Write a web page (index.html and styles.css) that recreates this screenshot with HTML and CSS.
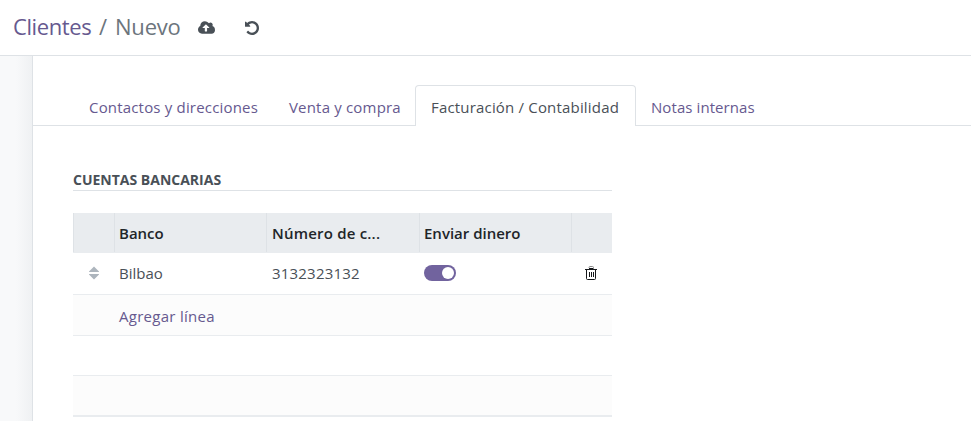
FILE: index.html
```html
<!DOCTYPE html>
<html lang="es">
<head>
<meta charset="utf-8">
<title>Clientes / Nuevo</title>
<link rel="stylesheet" href="styles.css">
</head>
<body>
<header class="control-panel">
  <div class="breadcrumb"><a class="crumb-link">Clientes</a><span class="crumb-sep">/</span><span class="crumb-current">Nuevo</span></div>
  <svg class="icon-save" viewBox="0 0 1920 1792"><path fill="currentColor" d="M1280 864q0-14-9-23L919 489q-9-9-23-9t-23 9L522 840q-10 12-10 24 0 14 9 23t23 9h224v352q0 13 9.500 22.500t22.500 9.500h192q13 0 22.500-9.500t9.500-22.500V896h224q13 0 22.500-9.500t9.500-22.500zm640 288q0 159-112.500 271.500T1536 1536H448q-185 0-316.500-131.500T0 1088q0-130 70-240t188-165q-2-30-2-43 0-212 150-362t362-150q156 0 285.500 87T1242 346q71-62 166-62 106 0 181 75t75 181q0 76-41 138 130 31 213.500 135.500T1920 1152z"/></svg>
  <svg class="icon-undo" viewBox="0 0 1536 1536"><path fill="currentColor" d="M1536 768q0 156-61 298t-164 245-245 164-298 61q-172 0-327-72.500T177 1259q-7-10-6.500-22.500t8.500-20.500l137-138q10-9 25-9 16 2 23 12 73 95 179 147t225 52q104 0 198.500-40.500T1130 1130t109.500-163.500T1280 768t-40.500-198.500T1130 406 966.500 296.500 768 256q-98 0-188 35.500T420 393l137 138q31 30 14 69-17 40-59 40H64q-26 0-45-19T0 576V128q0-42 40-59 39-17 69 14l130 129Q346 111 483.500 55.500T768 0q156 0 298 61t245 164 164 245 61 298z"/></svg>
</header>
<main class="content">
  <section class="sheet">
    <nav class="tabs">
      <a class="tab tab-contacts">Contactos y direcciones</a>
      <a class="tab tab-sales">Venta y compra</a>
      <a class="tab active">Facturación / Contabilidad</a>
      <a class="tab tab-notes">Notas internas</a>
    </nav>
    <div class="panel">
      <h2 class="group-title"><span>Cuentas bancarias</span></h2>
      <div class="table">
        <div class="row head">
          <div class="cell"></div>
          <div class="cell"><span>Banco</span></div>
          <div class="cell col-number"><span>Número de c...</span></div>
          <div class="cell"><span>Enviar dinero</span></div>
          <div class="cell"></div>
        </div>
        <div class="row record">
          <div class="cell handle"><svg viewBox="0 0 10 14"><path fill="currentColor" d="M5 0.500 10 5.500V6H0V5.500ZM0 8H10V8.500L5 13.500 0 8.500Z"/></svg></div>
          <div class="cell"><span>Bilbao</span></div>
          <div class="cell col-number"><span>3132323132</span></div>
          <div class="cell"><span class="switch"></span></div>
          <div class="cell trash"><svg viewBox="0 0 12 14"><path fill="none" stroke="#888" d="M4 2V1.500Q4 .5 5 .5H7.500Q8.500.5 8.500 1.500V2"/><path fill="none" stroke="#16181b" d="M0 3.500H12M1.500 3.500V12.500Q1.500 13.500 2.500 13.500H9.500Q10.500 13.500 10.500 12.500V3.500M4 2.500H8.500M4.500 6V11M6.500 6V11M8.500 6V11"/></svg></div>
        </div>
        <div class="row filler shaded add"><a>Agregar línea</a></div>
        <div class="row filler"></div>
        <div class="row filler shaded last"></div>
      </div>
    </div>
  </section>
</main>
</body>
</html>
```

FILE: styles.css
```css
* { box-sizing: border-box; }
body {
  margin: 0;
  height: 421px;
  overflow: hidden;
  background: #fff;
  color: #495057;
  font-family: "Open Sans", "Noto Sans", sans-serif;
  font-size: 15px;
  line-height: 24px;
}
.control-panel {
  display: flex;
  align-items: center;
  height: 56px;
  padding-left: 13px;
  border-bottom: 1px solid #dee2e6;
}
.breadcrumb {
  display: flex;
  width: 185px;
  margin-bottom: 3px;
  font-size: 22px;
  line-height: 30px;
}
.crumb-link { color: #66598f; width: 86px; letter-spacing: -0.4px; }
.crumb-sep { color: #6c757d; width: 16px; }
.crumb-current { color: #6c757d; letter-spacing: -0.2px; }
.icon-save { width: 17px; height: 16px; color: #495057; }
.icon-undo { width: 14px; height: 14px; margin-left: 30px; color: #495057; }
.content {
  height: 365px;
  padding-left: 32px;
  background: linear-gradient(to right, #f8f9fa 0, #f8f9fa 16px, #eff1f3 32px);
}
.sheet { height: 365px; background: #fff; border-left: 1px solid #dee2e6; }
.tabs {
  display: flex;
  height: 70px;
  padding: 29px 0 0 40px;
  border-bottom: 1px solid #dee2e6;
}
.tab {
  height: 41px;
  padding: 9px 0 0 15px;
  border: 1px solid transparent;
  border-bottom: 0;
  color: #66598f;
  letter-spacing: 0.18px;
  white-space: nowrap;
}
.tab-contacts { width: 200px; }
.tab-sales { width: 142px; }
.tab.active {
  width: 221px;
  background: #fff;
  border-color: #dee2e6;
  border-radius: 4px 4px 0 0;
  color: #495057;
}
.tab-notes { padding-left: 14px; letter-spacing: 0.08px; }
.panel { width: 579px; padding: 44px 0 0 40px; }
.group-title {
  height: 21px;
  margin: 0 0 22px;
  border-bottom: 1px solid #dee2e6;
  font-size: 14px;
  font-weight: 700;
  line-height: 20px;
  text-transform: uppercase;
}
.row { display: grid; grid-template-columns: 41px 152px 153px 152px 41px; }
.head { height: 40px; background: #e9ecef; color: #212529; font-weight: 600; }
.cell { padding: 8px 0 0 5px; white-space: nowrap; }
.col-number { letter-spacing: 0.2px; }
.head .cell { height: 39px; padding-left: 4px; border-left: 1px solid #dee2e6; }
.head .col-number { padding-left: 5px; }
.record { height: 42px; border-bottom: 1px solid #e9ecef; }
.record .col-number { padding-left: 6px; }
.handle { display: flex; padding: 13px 0 0 16px; color: #adb5bd; }
.handle svg { width: 10px; height: 14px; }
.switch {
  display: flex;
  justify-content: flex-end;
  width: 32px;
  height: 16px;
  margin-top: 4px;
  padding: 2px;
  border-radius: 8px;
  background: #71639e;
}
.switch::after { content: ""; width: 12px; height: 12px; border-radius: 50%; background: #fff; }
.trash { display: flex; padding: 13px 0 0 14px; }
.trash svg { width: 12px; height: 14px; }
.filler { display: block; height: 40px; border-bottom: 1px solid #e9ecef; }
.shaded { background: #fcfcfc; }
.add { height: 41px; padding: 9px 0 0 46px; color: #66598f; letter-spacing: 0.28px; }
.last { height: 41px; border-bottom-width: 2px; }
```
